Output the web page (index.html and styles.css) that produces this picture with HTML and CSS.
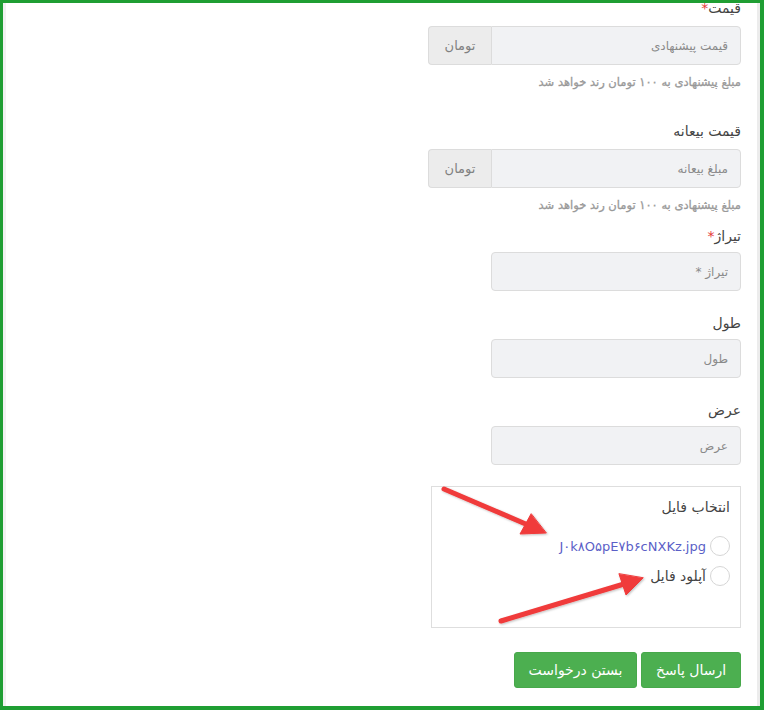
FILE: index.html
```html
<!DOCTYPE html>
<html lang="fa">
<head>
  <meta charset="UTF-8">
  <meta name="viewport" content="width=device-width, initial-scale=1.0">
  <title>پاسخ به درخواست</title>
  <link rel="stylesheet" href="styles.css">
</head>
<body>
  <div class="frame">
    <div class="page">
      <form class="reply-form" dir="rtl">
        <div class="form-group group-price">
          <label class="control-label">قیمت<span class="required">*</span></label>
          <div class="input-group">
            <input type="text" class="form-control" placeholder="قیمت پیشنهادی">
            <span class="input-addon">تومان</span>
          </div>
          <p class="help-block">مبلغ پیشنهادی به ۱۰۰ تومان رند خواهد شد</p>
        </div>

        <div class="form-group group-deposit">
          <label class="control-label">قیمت بیعانه</label>
          <div class="input-group">
            <input type="text" class="form-control" placeholder="مبلغ بیعانه">
            <span class="input-addon">تومان</span>
          </div>
          <p class="help-block">مبلغ پیشنهادی به ۱۰۰ تومان رند خواهد شد</p>
        </div>

        <div class="form-group">
          <label class="control-label">تیراژ<span class="required">*</span></label>
          <input type="text" class="form-control short" placeholder="تیراژ *">
        </div>

        <div class="form-group">
          <label class="control-label">طول</label>
          <input type="text" class="form-control short" placeholder="طول">
        </div>

        <div class="form-group group-last">
          <label class="control-label">عرض</label>
          <input type="text" class="form-control short" placeholder="عرض">
        </div>

        <fieldset class="file-box">
          <div class="file-title">انتخاب فایل</div>
          <label class="radio">
            <span class="radio-circle"></span>
            <a class="file-link" href="#">J۰k۸O۵pE۷b۶cNXKz.jpg</a>
          </label>
          <label class="radio">
            <span class="radio-circle"></span>
            <span>آپلود فایل</span>
          </label>
        </fieldset>

        <div class="actions">
          <button type="button" class="btn">ارسال پاسخ</button>
          <button type="button" class="btn">بستن درخواست</button>
        </div>
      </form>

      <!-- screenshot annotation arrows -->
      <svg class="arrows" width="764" height="710" viewBox="0 0 764 710">
        <defs>
          <filter id="shadow" x="-20%" y="-20%" width="140%" height="140%">
            <feDropShadow dx="1" dy="1" stdDeviation="1" flood-color="#000" flood-opacity="0.25"/>
          </filter>
        </defs>
        <g fill="#f03a3a" stroke="#f03a3a" stroke-linecap="round" filter="url(#shadow)">
          <line x1="444" y1="489" x2="528" y2="525" stroke-width="5"/>
          <polygon points="546,533 520,534 531,514" stroke-width="1" stroke-linejoin="round"/>
          <line x1="501" y1="621" x2="624" y2="584" stroke-width="5"/>
          <polygon points="643,578 626,595 619,574" stroke-width="1" stroke-linejoin="round"/>
        </g>
      </svg>
    </div>
  </div>
</body>
</html>
```

FILE: styles.css
```css
:root {
  --green-frame: #1f9e33;
  --green: #4caf50;
  --text: #444;
  --muted: #999;
  --field-bg: #f1f2f4;
  --field-border: #dcdcdc;
}
* {
  box-sizing: border-box;
}
body {
  margin: 0;
  font-family: "DejaVu Sans", "Noto Sans", sans-serif;
  font-size: 14px;
  color: var(--text);
  background: #fff;
}
.frame {
  width: 764px;
  height: 710px;
  border: 3px solid var(--green-frame);
  border-bottom-width: 4px;
  border-right-width: 4px;
  overflow: hidden;
}
.page {
  position: relative;
  height: 100%;
  border-left: 3px solid #f1f1f1;
  border-right: 3px solid #ececec;
  display: flex;
  justify-content: flex-end;
  padding-right: 16px;
}
.reply-form {
  width: 313px;
  margin-top: -5px;
}
.form-group {
  margin-bottom: 22px;
}
.group-price {
  margin-bottom: 30px;
}
.group-deposit {
  margin-bottom: 12px;
}
.group-last {
  margin-bottom: 21px;
}
.control-label {
  display: block;
  line-height: 20px;
  margin-bottom: 6px;
}
.group-price .control-label,
.group-deposit .control-label {
  margin-bottom: 8px;
}
.required {
  color: #e53935;
}
.input-group {
  display: flex;
  height: 39px;
}
.form-control {
  display: block;
  height: 39px;
  width: 100%;
  padding: 0 12px;
  font-family: inherit;
  font-size: 12px;
  color: var(--text);
  background: var(--field-bg);
  border: 1px solid var(--field-border);
  border-radius: 4px;
  outline: none;
  direction: rtl;
}
.form-control::placeholder {
  color: #8a8a8a;
}
.form-control.short {
  width: 250px;
}
.input-group .form-control {
  flex: 1;
  border-radius: 0 4px 4px 0;
}
.input-addon {
  width: 63px;
  display: flex;
  align-items: center;
  justify-content: center;
  background: #ececec;
  border: 1px solid var(--field-border);
  border-right: none;
  border-radius: 4px 0 0 4px;
  color: #808080;
  font-size: 13px;
}
.help-block {
  margin: 8px 0 0;
  line-height: 18px;
  font-size: 11.5px;
  color: var(--muted);
  -webkit-text-stroke: 0.3px var(--muted);
}
.file-box {
  margin: 0;
  width: 310px;
  height: 142px;
  padding: 10px 10px 0;
  border: 1px solid #dedede;
}
.file-title {
  line-height: 20px;
  margin-bottom: 19px;
}
.radio {
  display: flex;
  align-items: center;
  gap: 4px;
  height: 20px;
  margin-bottom: 10px;
}
.radio-circle {
  width: 20px;
  height: 20px;
  border: 1px solid #d6d6d6;
  border-radius: 50%;
  background: #fff;
}
.file-link {
  color: #5b5fc7;
  text-decoration: none;
  font-size: 13px;
}
.actions {
  display: flex;
  gap: 4px;
  margin-top: 24px;
}
.btn {
  height: 36px;
  padding: 0 12px;
  font-family: inherit;
  font-size: 14px;
  color: #fff;
  background: var(--green);
  border: 1px solid #47a84b;
  border-radius: 3px;
}
.btn:first-child {
  width: 100px;
}
.btn:last-child {
  width: 123px;
}
.arrows {
  position: absolute;
  top: -3px;
  left: -6px;
  pointer-events: none;
}
```
